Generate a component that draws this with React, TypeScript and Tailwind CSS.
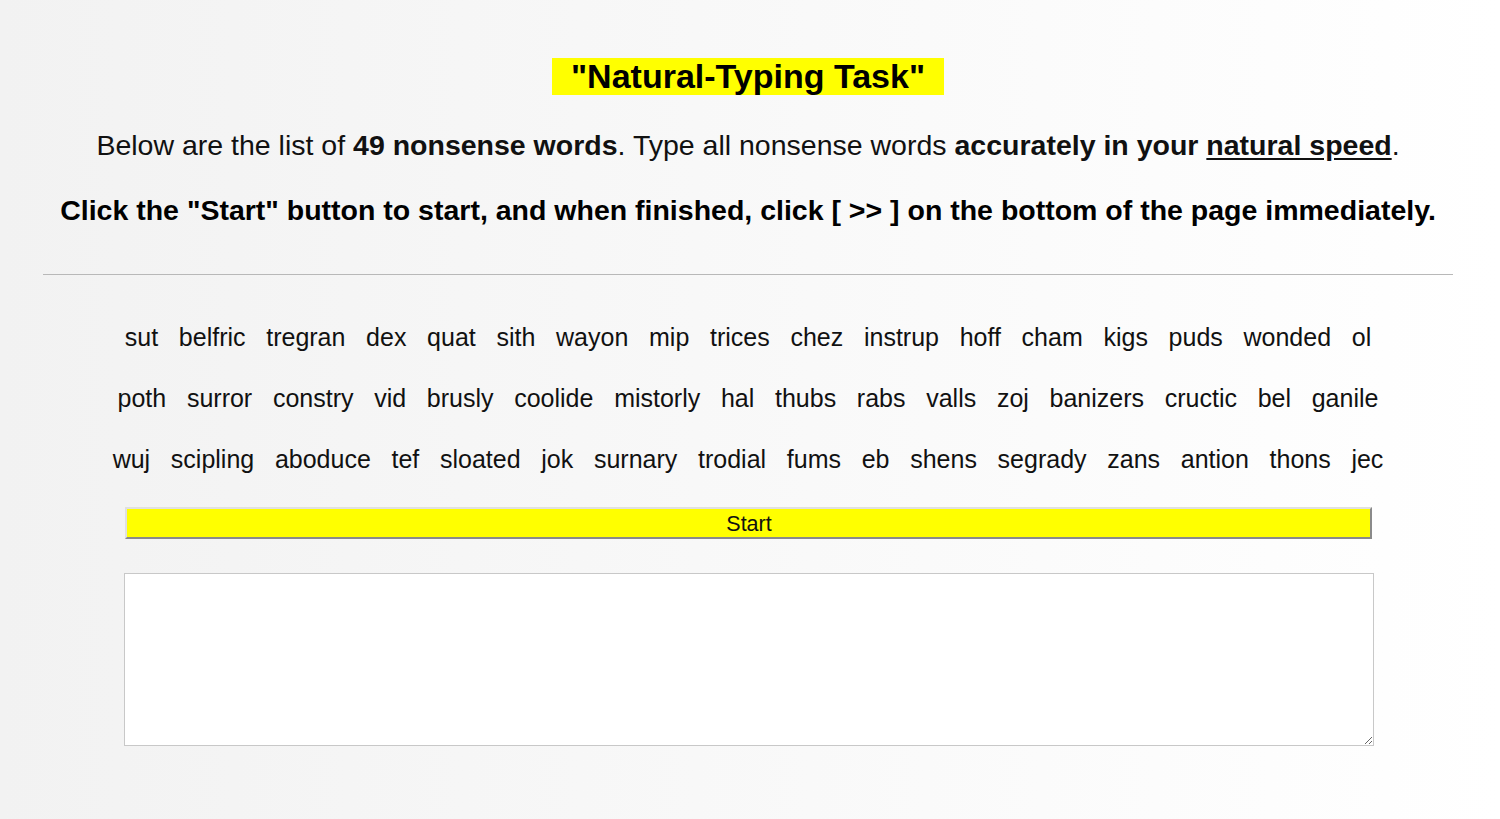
import React from "react";

const rows = [
  ["sut", "belfric", "tregran", "dex", "quat", "sith", "wayon", "mip", "trices", "chez", "instrup", "hoff", "cham", "kigs", "puds", "wonded", "ol"],
  ["poth", "surror", "constry", "vid", "brusly", "coolide", "mistorly", "hal", "thubs", "rabs", "valls", "zoj", "banizers", "cructic", "bel", "ganile"],
  ["wuj", "scipling", "aboduce", "tef", "sloated", "jok", "surnary", "trodial", "fums", "eb", "shens", "segrady", "zans", "antion", "thons", "jec"],
];

export default function App() {
  return (
    <div
      className="min-h-[819px] w-full bg-gradient-to-r from-[#f2f2f2] to-[#ffffff] text-black"
      style={{ fontFamily: '"Liberation Sans", Arial, sans-serif' }}
    >
      <div className="pl-[43px] pr-[47px] pt-[58px]">
        <div className="flex justify-center">
          <h1 className="bg-[#ffff00] px-[19px] text-[34px] font-bold leading-[37px]">"Natural-Typing Task"</h1>
        </div>
        <p className="mt-[34px] whitespace-nowrap text-center text-[28.5px] leading-[32px] text-[#111]">
          Below are the list of <b>49 nonsense words</b>. Type all nonsense words{" "}
          <b>
            accurately in your <u className="underline-offset-[3px]">natural speed</u>
          </b>
          .
        </p>
        <p className="mt-[33px] whitespace-nowrap text-center text-[28.5px] font-bold leading-[32px]">
          Click the "Start" button to start, and when finished, click [ &gt;&gt; ] on the bottom of the page immediately.
        </p>
        <hr className="mt-[48px] border-0 border-t border-[#b8b8b8]" />
        <div className="mt-[48px] flex flex-col items-center gap-[33px]">
          {rows.map((r, i) => (
            <div key={i} className="flex whitespace-nowrap text-[25px] leading-[28px] text-[#111]">
              {r.map((w, j) => (
                <span key={j} className="px-[10.35px]">{w}</span>
              ))}
            </div>
          ))}
        </div>
        <div className="mt-[34px] flex flex-col items-center">
          <button className="h-[32px] w-[1247px] border-2 border-t-[#e0e0e0] border-l-[#e0e0e0] border-r-[#8a8a8a] border-b-[#8a8a8a] bg-[#ffff00] pt-[3px] pl-[2px] text-[21.5px] leading-none text-[#111]">
            Start
          </button>
          <textarea className="ml-[2px] mt-[34px] h-[173px] w-[1250px] border border-[#c8c8c8] bg-white" />
        </div>
      </div>
    </div>
  );
}
